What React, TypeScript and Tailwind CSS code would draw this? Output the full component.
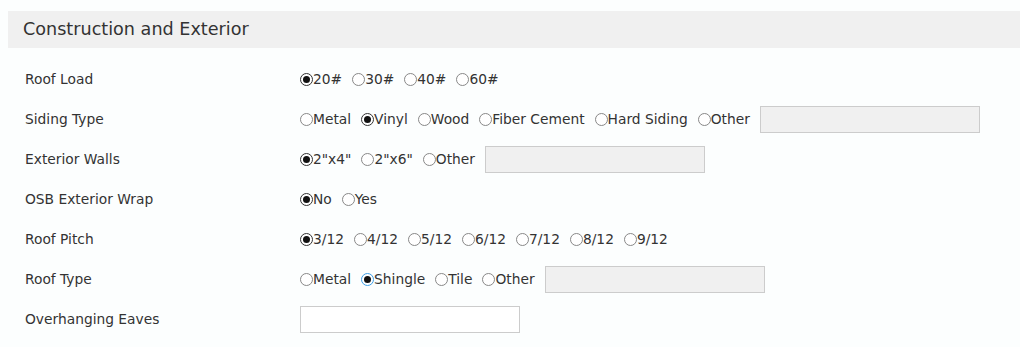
import { useState } from "react";

interface RowProps {
  label: string;
  children: React.ReactNode;
}

function Row({ label, children }: RowProps) {
  return (
    <div className="flex items-center h-10">
      <div className="w-[300px] pl-[25px] shrink-0">{label}</div>
      <div className="flex items-center">{children}</div>
    </div>
  );
}

interface RadioGroupProps {
  name: string;
  options: string[];
  initial: string;
  focused?: boolean;
}

function RadioGroup({ name, options, initial, focused }: RadioGroupProps) {
  const [value, setValue] = useState(initial);
  return (
    <>
      {options.map((opt) => {
        const checked = value === opt;
        return (
          <label
            key={opt}
            className="flex items-center mr-[10px] cursor-pointer"
            onClick={() => setValue(opt)}
          >
            <input type="radio" name={name} className="sr-only" checked={checked} readOnly />
            <span
              className={`w-[13px] h-[13px] rounded-full border flex items-center justify-center bg-white ${
                checked && focused ? "border-[#3c9ee6]" : checked ? "border-[#333]" : "border-[#888]"
              }`}
            >
              {checked && <span className="w-[7px] h-[7px] rounded-full bg-[#111]" />}
            </span>
            <span>{opt}</span>
          </label>
        );
      })}
    </>
  );
}

function OtherInput({ white }: { white?: boolean }) {
  return (
    <input
      type="text"
      className={`w-[220px] h-[27px] border border-[#cccccc] outline-none ${white ? "bg-white" : "bg-[#f0f0f0]"}`}
    />
  );
}

export default function App() {
  return (
    <div
      className="w-[1020px] h-[347px] bg-[#fcfefe] pt-[11px] text-[13.8px] text-[#333] overflow-hidden"
      style={{ fontFamily: '"DejaVu Sans", Verdana, sans-serif' }}
    >
      <div className="ml-2 h-[37px] bg-[#f0f0f0] flex items-center pl-[15px] text-[17.6px] text-[#333]">
        Construction and Exterior
      </div>
      <div className="mt-[11px]">
        <Row label="Roof Load">
          <RadioGroup name="roofLoad" options={["20#", "30#", "40#", "60#"]} initial="20#" />
        </Row>
        <Row label="Siding Type">
          <RadioGroup
            name="siding"
            options={["Metal", "Vinyl", "Wood", "Fiber Cement", "Hard Siding", "Other"]}
            initial="Vinyl"
          />
          <OtherInput />
        </Row>
        <Row label="Exterior Walls">
          <RadioGroup name="walls" options={['2"x4"', '2"x6"', "Other"]} initial={'2"x4"'} />
          <OtherInput />
        </Row>
        <Row label="OSB Exterior Wrap">
          <RadioGroup name="osb" options={["No", "Yes"]} initial="No" />
        </Row>
        <Row label="Roof Pitch">
          <RadioGroup
            name="pitch"
            options={["3/12", "4/12", "5/12", "6/12", "7/12", "8/12", "9/12"]}
            initial="3/12"
          />
        </Row>
        <Row label="Roof Type">
          <RadioGroup name="roofType" options={["Metal", "Shingle", "Tile", "Other"]} initial="Shingle" focused />
          <OtherInput />
        </Row>
        <Row label="Overhanging Eaves">
          <OtherInput white />
        </Row>
      </div>
    </div>
  );
}
